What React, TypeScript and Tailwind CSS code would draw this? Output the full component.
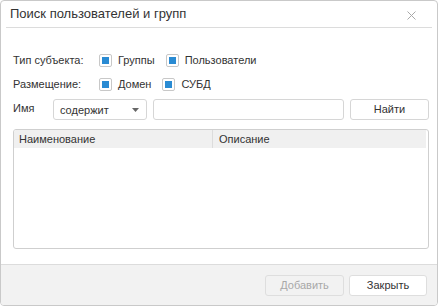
import React from "react";

function Check({ label }: { label: string }) {
  return (
    <div className="flex items-center">
      <div className="w-[13px] h-[13px] border border-[#c8c8c8] rounded-[2px] bg-white flex items-center justify-center shrink-0">
        <div className="w-[7px] h-[7px] bg-[#2a8bd3]" />
      </div>
      <span className="ml-[6px] text-[#333]">{label}</span>
    </div>
  );
}

export default function App() {
  return (
    <div
      className="w-[440px] h-[307px] bg-white"
      style={{ fontFamily: '"Liberation Sans", Arial, sans-serif' }}
    >
      <div className="w-[438px] h-[306px] border border-[#c9c9c9] rounded-[4px] flex flex-col overflow-hidden text-[11px]">
        <div className="mx-[5px] h-[28px] border-b border-[#dcdcdc] flex items-center justify-between pl-[4px] pr-[16px]">
          <span className="text-[13px] text-[#333]">Поиск пользователей и групп</span>
          <svg width="9" height="9" viewBox="0 0 9 9" className="mt-[2px]">
            <path d="M0.5 0.5 L8.5 8.5 M8.5 0.5 L0.5 8.5" stroke="#a8a8a8" strokeWidth="1" />
          </svg>
        </div>
        <div className="flex-1 flex flex-col pl-[12px] pr-[8px] pt-[24px]">
          <div className="flex items-center h-[16px]">
            <span className="w-[86px] shrink-0 text-[#333]">Тип субъекта:</span>
            <div className="flex gap-[11px]">
              <Check label="Группы" />
              <Check label="Пользователи" />
            </div>
          </div>
          <div className="flex items-center h-[16px] mt-[8px]">
            <span className="w-[86px] shrink-0 text-[#333]">Размещение:</span>
            <div className="flex gap-[11px]">
              <Check label="Домен" />
              <Check label="СУБД" />
            </div>
          </div>
          <div className="flex items-center mt-[7px] h-[21px]">
            <span className="w-[40px] shrink-0 text-[#333] -mt-[2px]">Имя</span>
            <div className="w-[94px] shrink-0 h-[21px] border border-[#d6d6d6] rounded-[3px] flex items-center justify-between pl-[6px] pr-[7px]">
              <span className="text-[#333] mt-[1px]">содержит</span>
              <svg width="7" height="4" viewBox="0 0 7 4">
                <path d="M0 0 L7 0 L3.5 4 Z" fill="#666" />
              </svg>
            </div>
            <div className="ml-[6px] w-[191px] shrink-0 h-[21px] border border-[#d6d6d6] rounded-[3px]" />
            <div className="ml-[6px] w-[79px] shrink-0 h-[21px] border border-[#d6d6d6] rounded-[3px] flex items-center justify-center text-[#333]">
              Найти
            </div>
          </div>
          <div className="mt-[9px] w-[416px] h-[120px] border border-[#cfcfcf] rounded-[3px] overflow-hidden">
            <div className="flex h-[18px] bg-[#f0f0f0] mr-[2px] text-[#333]">
              <div className="w-[199px] border-r border-[#dcdcdc] pl-[5px] flex items-center">Наименование</div>
              <div className="flex-1 pl-[6px] flex items-center">Описание</div>
            </div>
          </div>
        </div>
        <div className="h-[42px] border-t border-[#dcdcdc] bg-[#f2f2f2] flex items-center justify-end pr-[10px] gap-[5px] mt-[15px]">
          <div className="w-[79px] h-[21px] border border-[#dedede] rounded-[3px] flex items-center justify-center text-[#a8a8a8]">
            Добавить
          </div>
          <div className="w-[78px] h-[21px] border border-[#dedede] rounded-[3px] bg-white flex items-center justify-center text-[#333]">
            Закрыть
          </div>
        </div>
      </div>
    </div>
  );
}
